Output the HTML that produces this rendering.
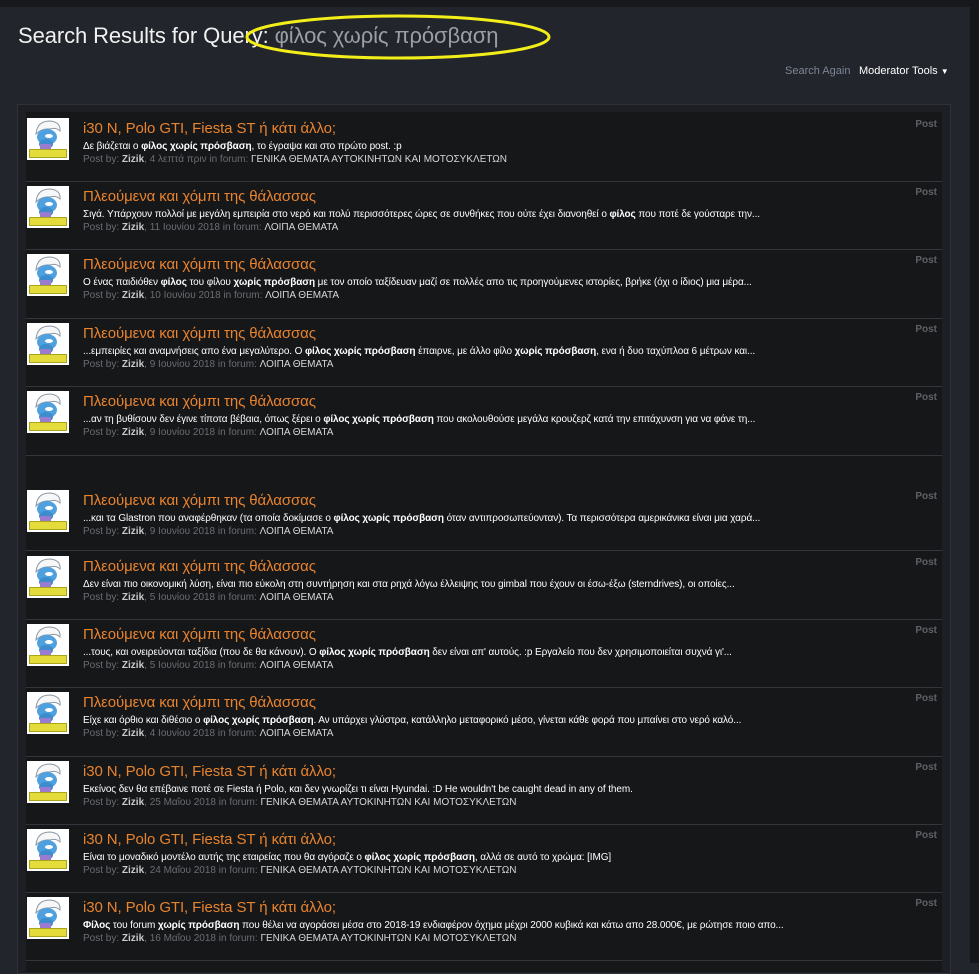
<!DOCTYPE html>
<html><head><meta charset="utf-8">
<style>
*{margin:0;padding:0;box-sizing:border-box}
html,body{width:979px;height:963px;overflow:hidden;background:#22252c;font-family:"Liberation Sans","DejaVu Sans",sans-serif}
.topband{position:absolute;left:0;top:0;width:979px;height:7px;background:#17181b}
.rstrip{position:absolute;left:970px;top:0;width:9px;height:963px;background:#16171a}
h1{position:absolute;left:18px;top:23px;font-size:22px;font-weight:normal;color:#f0f0f0;white-space:nowrap;letter-spacing:-0.1px}
h1 span{color:#9a9ea6}
.ell{position:absolute;left:244px;top:12px}
.sa{position:absolute;left:785px;top:65px;font-size:11px;color:#7d8693}
.mt{position:absolute;left:859px;top:65px;font-size:11px;color:#fff}
.cont{position:absolute;left:17px;top:104px;width:934px;height:870px;background:#1d1f24;border:1px solid #2e3138}
.rows{position:absolute;left:26px;top:112px;width:916px;height:860px;background:#161719}
.sep{position:absolute;left:0;width:916px;height:1px;background:#33363c}
.av{position:absolute;left:1px;width:42px;height:42px}
.t{position:absolute;left:57px;font-size:15px;color:#e8832e;white-space:nowrap;letter-spacing:-0.1px}
.s{position:absolute;left:57px;font-size:10px;color:#fff;white-space:nowrap;letter-spacing:-0.1px}
.m{position:absolute;left:57px;font-size:10px;color:#6a6d74;white-space:nowrap}
.m i{font-style:normal;color:#d5d7da}.m b{color:#c8cacd}
.p{position:absolute;right:5px;font-size:10px;font-weight:bold;color:#5e6167}
</style></head><body>
<div class="topband"></div><div class="rstrip"></div>
<h1>Search Results for Query: <span>φίλος χωρίς πρόσβαση</span></h1>
<svg class="ell" width="308" height="50"><ellipse cx="154" cy="25" rx="151" ry="21" fill="none" stroke="#f3ee1a" stroke-width="3"/></svg>
<div class="sa">Search Again</div>
<div class="mt">Moderator Tools <span style="font-size:8px">▼</span></div>
<div class="cont"></div>
<div class="rows" id="rows"></div>
<svg width="0" height="0" style="position:absolute">
<defs><symbol id="smurf" viewBox="0 0 42 42">
<rect width="42" height="42" fill="#fff"/>
<path d="M9 16 Q10 3 23 3 Q34 4 33 13 Q29 9 23 11 Q15 10 9 16Z" fill="#f7f7f7" stroke="#8a9aa8" stroke-width="1"/>
<ellipse cx="20" cy="19" rx="10" ry="8" fill="#4fa0de"/>
<ellipse cx="22" cy="18" rx="4" ry="2" fill="#fff"/>
<ellipse cx="19" cy="26" rx="7" ry="5" fill="#3d8ccc"/>
<rect x="13" y="26" width="11" height="5" fill="#9b7bd0"/>
<rect x="2" y="31" width="38" height="9" fill="#a9a61c"/>
<rect x="3" y="32" width="36" height="7" fill="#e3dc3a"/>
</symbol></defs></svg>
<script>
var S=[
["i30 N, Polo GTI, Fiesta ST ή κάτι άλλο;","Δε βιάζεται ο <b>φίλος χωρίς πρόσβαση</b>, το έγραψα και στο πρώτο post. :p","4 λεπτά πριν","ΓΕΝΙΚΑ ΘΕΜΑΤΑ ΑΥΤΟΚΙΝΗΤΩΝ ΚΑΙ ΜΟΤΟΣΥΚΛΕΤΩΝ"],
["Πλεούμενα και χόμπι της θάλασσας","Σιγά. Υπάρχουν πολλοί με μεγάλη εμπειρία στο νερό και πολύ περισσότερες ώρες σε συνθήκες που ούτε έχει διανοηθεί ο <b>φίλος</b> που ποτέ δε γούσταρε την...","11 Ιουνίου 2018","ΛΟΙΠΑ ΘΕΜΑΤΑ"],
["Πλεούμενα και χόμπι της θάλασσας","Ο ένας παιδιόθεν <b>φίλος</b> του φίλου <b>χωρίς πρόσβαση</b> με τον οποίο ταξίδευαν μαζί σε πολλές απο τις προηγούμενες ιστορίες, βρήκε (όχι ο ίδιος) μια μέρα...","10 Ιουνίου 2018","ΛΟΙΠΑ ΘΕΜΑΤΑ"],
["Πλεούμενα και χόμπι της θάλασσας","...εμπειρίες και αναμνήσεις απο ένα μεγαλύτερο. Ο <b>φίλος χωρίς πρόσβαση</b> έπαιρνε, με άλλο φίλο <b>χωρίς πρόσβαση</b>, ενα ή δυο ταχύπλοα 6 μέτρων και...","9 Ιουνίου 2018","ΛΟΙΠΑ ΘΕΜΑΤΑ"],
["Πλεούμενα και χόμπι της θάλασσας","...αν τη βυθίσουν δεν έγινε τίποτα βέβαια, όπως ξέρει ο <b>φίλος χωρίς πρόσβαση</b> που ακολουθούσε μεγάλα κρουζερζ κατά την επιτάχυνση για να φάνε τη...","9 Ιουνίου 2018","ΛΟΙΠΑ ΘΕΜΑΤΑ"],
["Πλεούμενα και χόμπι της θάλασσας","...και τα Glastron που αναφέρθηκαν (τα οποία δοκίμασε ο <b>φίλος χωρίς πρόσβαση</b> όταν αντιπροσωπεύονταν). Τα περισσότερα αμερικάνικα είναι μια χαρά...","9 Ιουνίου 2018","ΛΟΙΠΑ ΘΕΜΑΤΑ"],
["Πλεούμενα και χόμπι της θάλασσας","Δεν είναι πιο οικονομική λύση, είναι πιο εύκολη στη συντήρηση και στα ρηχά λόγω έλλειψης του gimbal που έχουν οι έσω-έξω (sterndrives), οι οποίες...","5 Ιουνίου 2018","ΛΟΙΠΑ ΘΕΜΑΤΑ"],
["Πλεούμενα και χόμπι της θάλασσας","...τους, και ονειρεύονται ταξίδια (που δε θα κάνουν). Ο <b>φίλος χωρίς πρόσβαση</b> δεν είναι απ' αυτούς. :p Εργαλείο που δεν χρησιμοποιείται συχνά γι'...","5 Ιουνίου 2018","ΛΟΙΠΑ ΘΕΜΑΤΑ"],
["Πλεούμενα και χόμπι της θάλασσας","Είχε και όρθιο και διθέσιο ο <b>φίλος χωρίς πρόσβαση</b>. Αν υπάρχει γλύστρα, κατάλληλο μεταφορικό μέσο, γίνεται κάθε φορά που μπαίνει στο νερό καλό...","4 Ιουνίου 2018","ΛΟΙΠΑ ΘΕΜΑΤΑ"],
["i30 N, Polo GTI, Fiesta ST ή κάτι άλλο;","Εκείνος δεν θα επέβαινε ποτέ σε Fiesta ή Polo, και δεν γνωρίζει τι είναι Hyundai. :D He wouldn't be caught dead in any of them.","25 Μαΐου 2018","ΓΕΝΙΚΑ ΘΕΜΑΤΑ ΑΥΤΟΚΙΝΗΤΩΝ ΚΑΙ ΜΟΤΟΣΥΚΛΕΤΩΝ"],
["i30 N, Polo GTI, Fiesta ST ή κάτι άλλο;","Είναι το μοναδικό μοντέλο αυτής της εταιρείας που θα αγόραζε ο <b>φίλος χωρίς πρόσβαση</b>, αλλά σε αυτό το χρώμα: [IMG]","24 Μαΐου 2018","ΓΕΝΙΚΑ ΘΕΜΑΤΑ ΑΥΤΟΚΙΝΗΤΩΝ ΚΑΙ ΜΟΤΟΣΥΚΛΕΤΩΝ"],
["i30 N, Polo GTI, Fiesta ST ή κάτι άλλο;","<b>Φίλος</b> του forum <b>χωρίς πρόσβαση</b> που θέλει να αγοράσει μέσα στο 2018-19 ενδιαφέρον όχημα μέχρι 2000 κυβικά και κάτω απο 28.000€, με ρώτησε ποιο απο...","16 Μαΐου 2018","ΓΕΝΙΚΑ ΘΕΜΑΤΑ ΑΥΤΟΚΙΝΗΤΩΝ ΚΑΙ ΜΟΤΟΣΥΚΛΕΤΩΝ"]];
var tops=[1,69,137,206,274,373,439,507,575,644,712,780];
var seps=[69,137,206,274,343,438,507,575,644,712,780,848];
var h='';
for(var i=0;i<12;i++){
 var t=tops[i];
 h+='<div class="sep" style="top:'+seps[i]+'px"></div>';
 h+='<svg class="av" style="top:'+(t+5)+'px"><use href="#smurf"/></svg>';
 h+='<div class="t" style="top:'+(t+7)+'px">'+S[i][0]+'</div>';
 h+='<div class="s" style="top:'+(t+28)+'px">'+S[i][1]+'</div>';
 h+='<div class="m" style="top:'+(t+41)+'px">Post by: <b>Zizik</b>, '+S[i][2]+' in forum: <i>'+S[i][3]+'</i></div>';
 h+='<div class="p" style="top:'+(t+6)+'px">Post</div>';
}
document.getElementById('rows').innerHTML=h;
</script>
</body></html>
